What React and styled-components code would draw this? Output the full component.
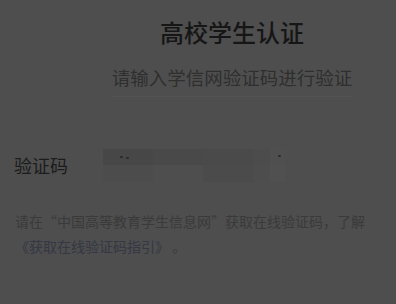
import React from "react";
import styled, { createGlobalStyle } from "styled-components";

const Global = createGlobalStyle`
  html, body { margin: 0; padding: 0; background: #4e4e4e; }
  body { font-family: "Noto Sans CJK SC", "Noto Sans", sans-serif; }
`;

const Page = styled.div`
  width: 396px;
  height: 304px;
  background: #4e4e4e;
  display: flex;
  flex-direction: column;
  overflow: hidden;
`;

const Header = styled.div`
  display: flex;
  flex-direction: column;
  align-items: center;
  padding: 20px 0 0 68px;
`;

const Title = styled.h1`
  margin: 0;
  font-size: 24px;
  line-height: 24px;
  font-weight: 500;
  color: #161616;
  white-space: nowrap;
`;

const Subtitle = styled.p`
  margin: 24px 0 0;
  font-size: 18.5px;
  line-height: 19px;
  color: #2f2f2f;
  padding-bottom: 9px;
  border-bottom: 1px solid #535353;
  white-space: nowrap;
`;

const Row = styled.div`
  display: flex;
  align-items: flex-start;
  margin-top: 55px;
  padding-left: 14px;
`;

const Label = styled.span`
  flex: none;
  font-size: 18px;
  line-height: 20px;
  color: #1c1c1c;
  width: 89px;
  padding-top: 3px;
`;

const Mosaic = styled.div`
  flex: none;
  display: grid;
  grid-template-columns: 50px 50px 50px 17px 15px;
  grid-template-rows: 16px 17px;
  margin-top: -3px;
`;

const Tile = styled.div`
  background: ${(p) => p.$c};
  position: relative;
`;

const Dot = styled.span`
  position: absolute;
  width: 3px;
  height: 2px;
  border-radius: 1px;
  background: #2a2a2a;
  left: ${(p) => p.$x}px;
  top: ${(p) => p.$y}px;
`;

const Note = styled.p`
  margin: 27px 0 0;
  padding: 0 14px 0 15px;
  font-size: 14px;
  line-height: 25px;
  color: #3a3a3a;
  white-space: nowrap;
`;

const Link = styled.span`
  color: #333844;
`;

const tiles = [
  "#474747", "#494949", "#4a4a4a", "#4c4c4c", "#4f4f4f",
  "#4c4c4c", "#4e4e4e", "#4b4b4b", "#4d4d4d", "#505050",
];

export default function App() {
  return (
    <Page>
      <Global />
      <Header>
        <Title>高校学生认证</Title>
        <Subtitle>请输入学信网验证码进行验证</Subtitle>
      </Header>
      <Row>
        <Label>验证码</Label>
        <Mosaic>
          {tiles.map((c, i) => (
            <Tile key={i} $c={c}>
              {i === 0 && <Dot $x={17} $y={7} />}
              {i === 0 && <Dot $x={23} $y={8} />}
              {i === 4 && <Dot $x={8} $y={6} />}
            </Tile>
          ))}
        </Mosaic>
      </Row>
      <Note>
        请在“中国高等教育学生信息网”获取在线验证码，了解
        <br />
        <Link>《获取在线验证码指引》</Link> 。
      </Note>
    </Page>
  );
}
